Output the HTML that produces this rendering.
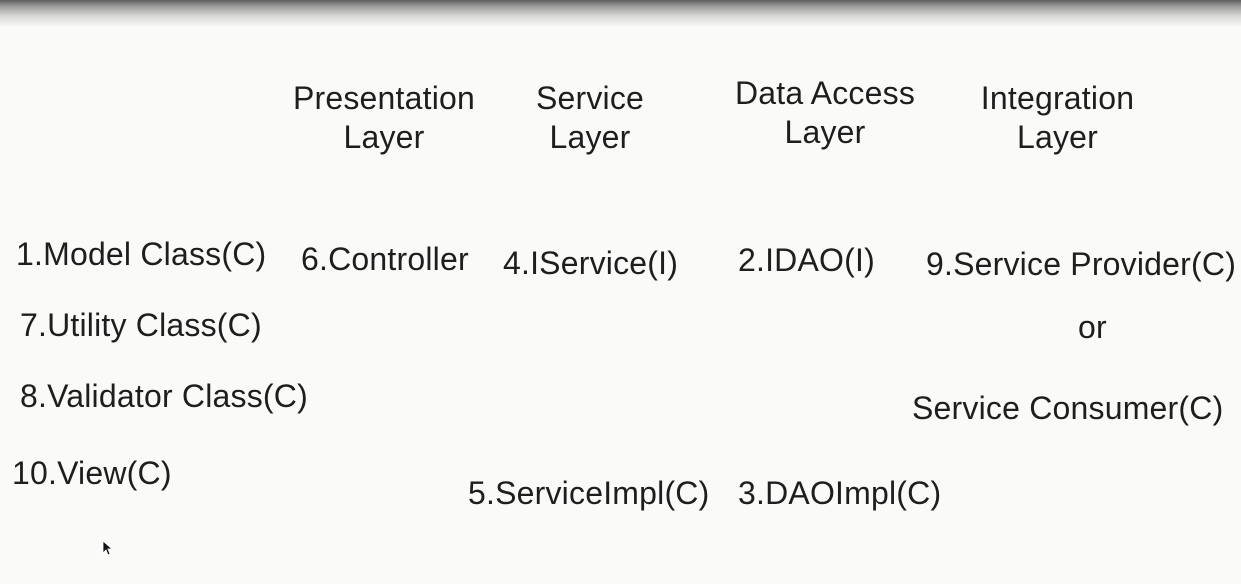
<!DOCTYPE html>
<html><head><style>
html,body{margin:0;padding:0}
body{width:1241px;height:584px;background:#fafaf8;position:relative;overflow:hidden;font-family:"Liberation Sans",sans-serif;color:#1e1e1e}
.top{position:absolute;left:0;top:0;width:1241px;height:28px;background:linear-gradient(#5e5e5e,#9a9a9a 6px,#d8d8d6 16px,#fafaf8 27px)}
.t{position:absolute;font-size:32px;line-height:32px;white-space:nowrap;letter-spacing:0.2px}
.c{text-align:center}
</style></head><body>
<div class="top"></div>
<div class="t c" style="left:284px;width:200px;top:79px;line-height:39px">Presentation<br>Layer</div>
<div class="t c" style="left:500px;width:180px;top:79px;line-height:39px">Service<br>Layer</div>
<div class="t c" style="left:720px;width:210px;top:74px;line-height:39px">Data Access<br>Layer</div>
<div class="t c" style="left:960px;width:195px;top:79px;line-height:39px">Integration<br>Layer</div>
<div class="t" style="left:16px;top:238px">1.Model Class(C)</div>
<div class="t" style="left:20px;top:309px">7.Utility Class(C)</div>
<div class="t" style="left:20px;top:380px">8.Validator Class(C)</div>
<div class="t" style="left:12px;top:457px">10.View(C)</div>
<div class="t" style="left:301px;top:243px">6.Controller</div>
<div class="t" style="left:503px;top:247px">4.IService(I)</div>
<div class="t" style="left:738px;top:244px">2.IDAO(I)</div>
<div class="t" style="left:926px;top:248px">9.Service Provider(C)</div>
<div class="t" style="left:1078px;top:311px">or</div>
<div class="t" style="left:912px;top:392px">Service Consumer(C)</div>
<div class="t" style="left:468px;top:477px">5.ServiceImpl(C)</div>
<div class="t" style="left:738px;top:477px">3.DAOImpl(C)</div>
<svg style="position:absolute;left:102px;top:540px" width="12" height="16" viewBox="0 0 12 16"><path d="M1 1 L1 13 L4 10 L6 15 L8 14 L6 9 L10 9 Z" fill="#111" stroke="#fff" stroke-width="0.8"/></svg>
</body></html>
